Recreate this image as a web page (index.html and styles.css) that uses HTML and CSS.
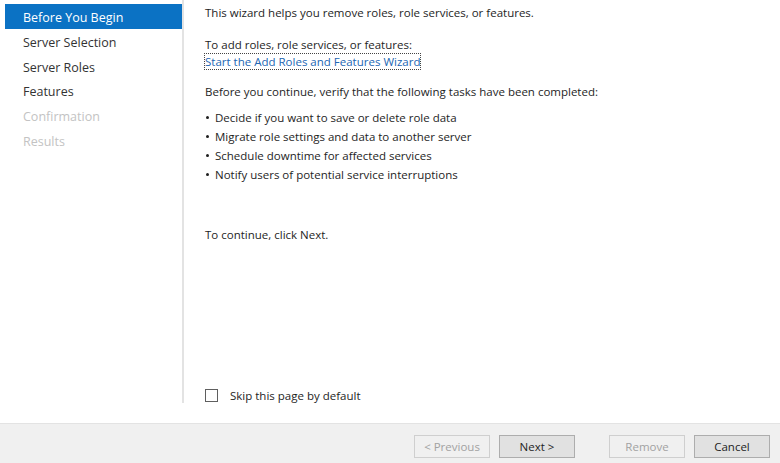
FILE: index.html
```html
<!DOCTYPE html>
<html>
<head>
<meta charset="utf-8">
<link rel="stylesheet" href="styles.css">
</head>
<body>
<div class="wizard">
  <div class="main">
    <nav class="nav">
      <div class="nav-item selected">Before You Begin</div>
      <div class="nav-item">Server Selection</div>
      <div class="nav-item">Server Roles</div>
      <div class="nav-item">Features</div>
      <div class="nav-item disabled">Confirmation</div>
      <div class="nav-item disabled">Results</div>
    </nav>
    <section class="content">
      <div class="body">
        <p class="intro">This wizard helps you remove roles, role services, or features.</p>
        <p class="add">To add roles, role services, or features:<br><a class="link" href="#">Start the Add Roles and Features Wizard</a></p>
        <p class="verify">Before you continue, verify that the following tasks have been completed:</p>
        <ul class="tasks">
          <li>Decide if you want to save or delete role data</li>
          <li>Migrate role settings and data to another server</li>
          <li>Schedule downtime for affected services</li>
          <li>Notify users of potential service interruptions</li>
        </ul>
        <p class="continue">To continue, click Next.</p>
      </div>
      <label class="skip"><span class="checkbox"></span>Skip this page by default</label>
    </section>
  </div>
  <footer class="footer">
    <button class="btn disabled">&lt; Previous</button>
    <button class="btn primary">Next &gt;</button>
    <button class="btn disabled gap">Remove</button>
    <button class="btn primary">Cancel</button>
  </footer>
</div>
</body>
</html>
```

FILE: styles.css
```css
* {
  box-sizing: border-box;
}
html, body {
  margin: 0;
  padding: 0;
  background: #ffffff;
}
body {
  font-family: "Open Sans", "Noto Sans", sans-serif;
  color: #1e1e1e;
}
.wizard {
  width: 780px;
  height: 463px;
  display: flex;
  flex-direction: column;
  overflow: hidden;
}
.main {
  height: 423px;
  flex: none;
  display: flex;
}
.nav {
  width: 184px;
  height: 403px;
  padding: 4px 0 0 5px;
  border-right: 2px solid #e3e3e3;
  display: flex;
  flex-direction: column;
}
.nav-item {
  height: 24.8px;
  line-height: 28.5px;
  flex: none;
  padding-left: 18px;
  font-size: 12.5px;
  color: #333333;
  white-space: nowrap;
}
.nav-item.selected {
  background: #0b72c4;
  color: #ffffff;
}
.nav-item.disabled {
  color: #c3c3c3;
}
.content {
  flex: 1;
  display: flex;
  flex-direction: column;
  padding-left: 21px;
  font-size: 11.5px;
}
.body {
  flex: 1;
}
.body p {
  margin: 0;
}
.intro {
  margin-top: 5px !important;
  line-height: 16px;
}
.add {
  margin-top: 15px !important;
  line-height: 17px;
}
.link {
  color: #2266b3;
  text-decoration: none;
  outline: 1px dotted #444;
  outline-offset: 0;
}
.verify {
  margin-top: 14px !important;
  line-height: 16px;
}
.tasks {
  list-style: none;
  margin: 8px 0 0 0;
  padding: 0;
}
.tasks li {
  line-height: 19px;
  position: relative;
  padding-left: 10px;
}
.tasks li::before {
  content: "";
  position: absolute;
  left: 1px;
  top: 8px;
  width: 3px;
  height: 3px;
  border-radius: 50%;
  background: #1e1e1e;
}
.continue {
  margin-top: 43px !important;
  line-height: 16px;
}
.skip {
  display: flex;
  align-items: center;
  height: 20px;
  margin-bottom: 18px;
  font-size: 11.5px;
}
.checkbox {
  width: 13px;
  height: 13px;
  border: 1px solid #5f5f5f;
  background: #fff;
  margin-right: 12px;
}
.footer {
  height: 40px;
  flex: none;
  background: #f0f0f0;
  border-top: 1px solid #e3e3e3;
  display: flex;
  justify-content: flex-end;
  align-items: flex-start;
  padding: 11px 10px 0 0;
  gap: 9px;
}
.btn {
  width: 76px;
  height: 23px;
  font-family: "Open Sans", "Noto Sans", sans-serif;
  font-size: 11.5px;
  background: #e1e1e1;
  border: 1px solid #adadad;
  color: #1e1e1e;
  padding: 0;
}
.btn.disabled {
  background: #f0f0f0;
  border-color: #cfcfcf;
  color: #a2a2a2;
}
.btn.gap {
  margin-left: 25px;
}
```
